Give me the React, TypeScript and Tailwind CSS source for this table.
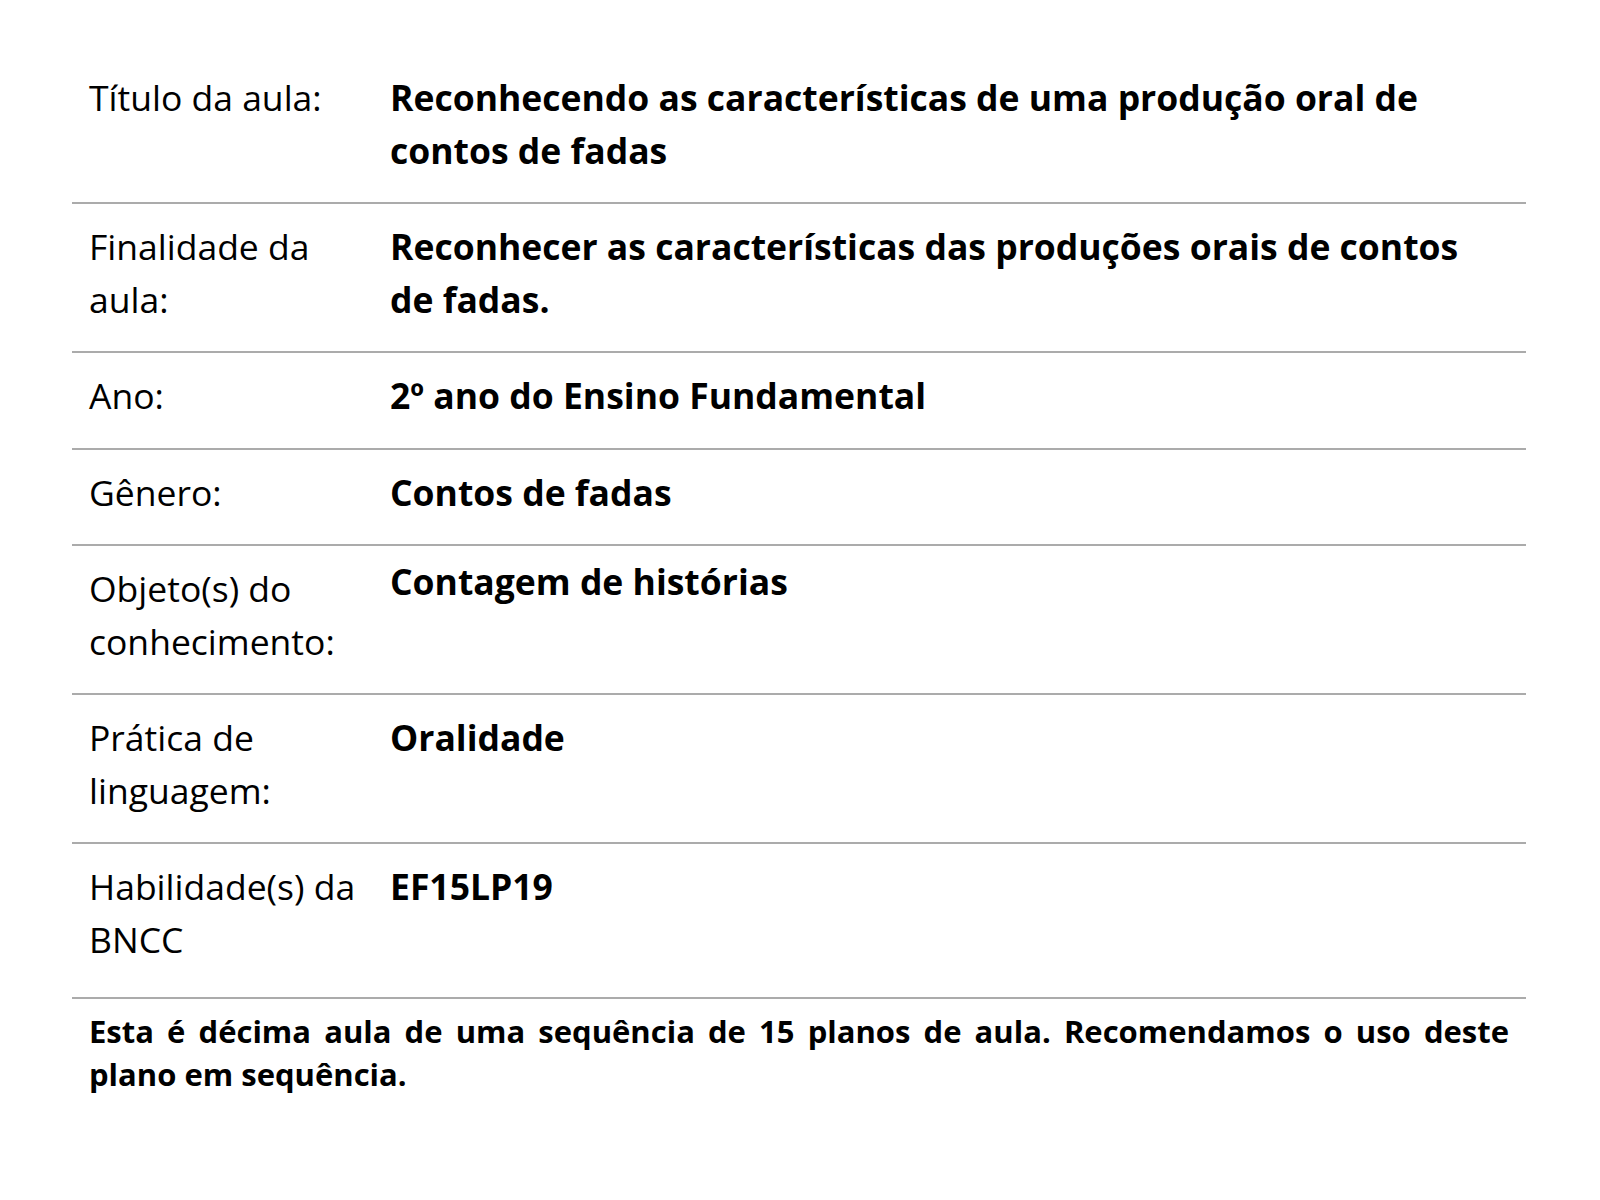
const rows: { label: string; value: string; valueClass?: string; rowClass?: string }[] = [
  {
    label: "Título da aula:",
    value: "Reconhecendo as características de uma produção oral de contos de fadas",
  },
  {
    label: "Finalidade da aula:",
    value: "Reconhecer as características das produções orais de contos de fadas.",
  },
  { label: "Ano:", value: "2º ano do Ensino Fundamental" },
  { label: "Gênero:", value: "Contos de fadas" },
  {
    label: "Objeto(s) do conhecimento:",
    value: "Contagem de histórias",
    valueClass: "-mt-[7px]",
  },
  { label: "Prática de linguagem:", value: "Oralidade" },
  { label: "Habilidade(s) da BNCC", value: "EF15LP19", rowClass: "pb-[32px]" },
];

export default function App() {
  return (
    <div className="min-h-[1200px] bg-white font-['Open_Sans',sans-serif] text-black">
      <div className="pl-[72px] pr-[74px] pt-[55px]">
        {rows.map((row) => (
          <div
            key={row.label}
            className="flex border-b-2 border-[#ababab]"
          >
            <div
              className={`w-[301px] shrink-0 px-[17px] pt-[16px] pb-[26px] text-[35.5px] leading-[52.5px] ${row.rowClass ?? ""}`}
            >
              {row.label}
            </div>
            <div
              className={`flex-1 px-[17px] pt-[16px] pb-[26px] text-[35.5px] font-bold leading-[52.5px] ${row.valueClass ?? ""}`}
            >
              {row.value}
            </div>
          </div>
        ))}
        <p className="px-[17px] pt-[11px] text-justify text-[31px] font-bold leading-[43px]">
          Esta é décima aula de uma sequência de 15 planos de aula. Recomendamos o uso deste
          plano em sequência.
        </p>
      </div>
    </div>
  );
}
